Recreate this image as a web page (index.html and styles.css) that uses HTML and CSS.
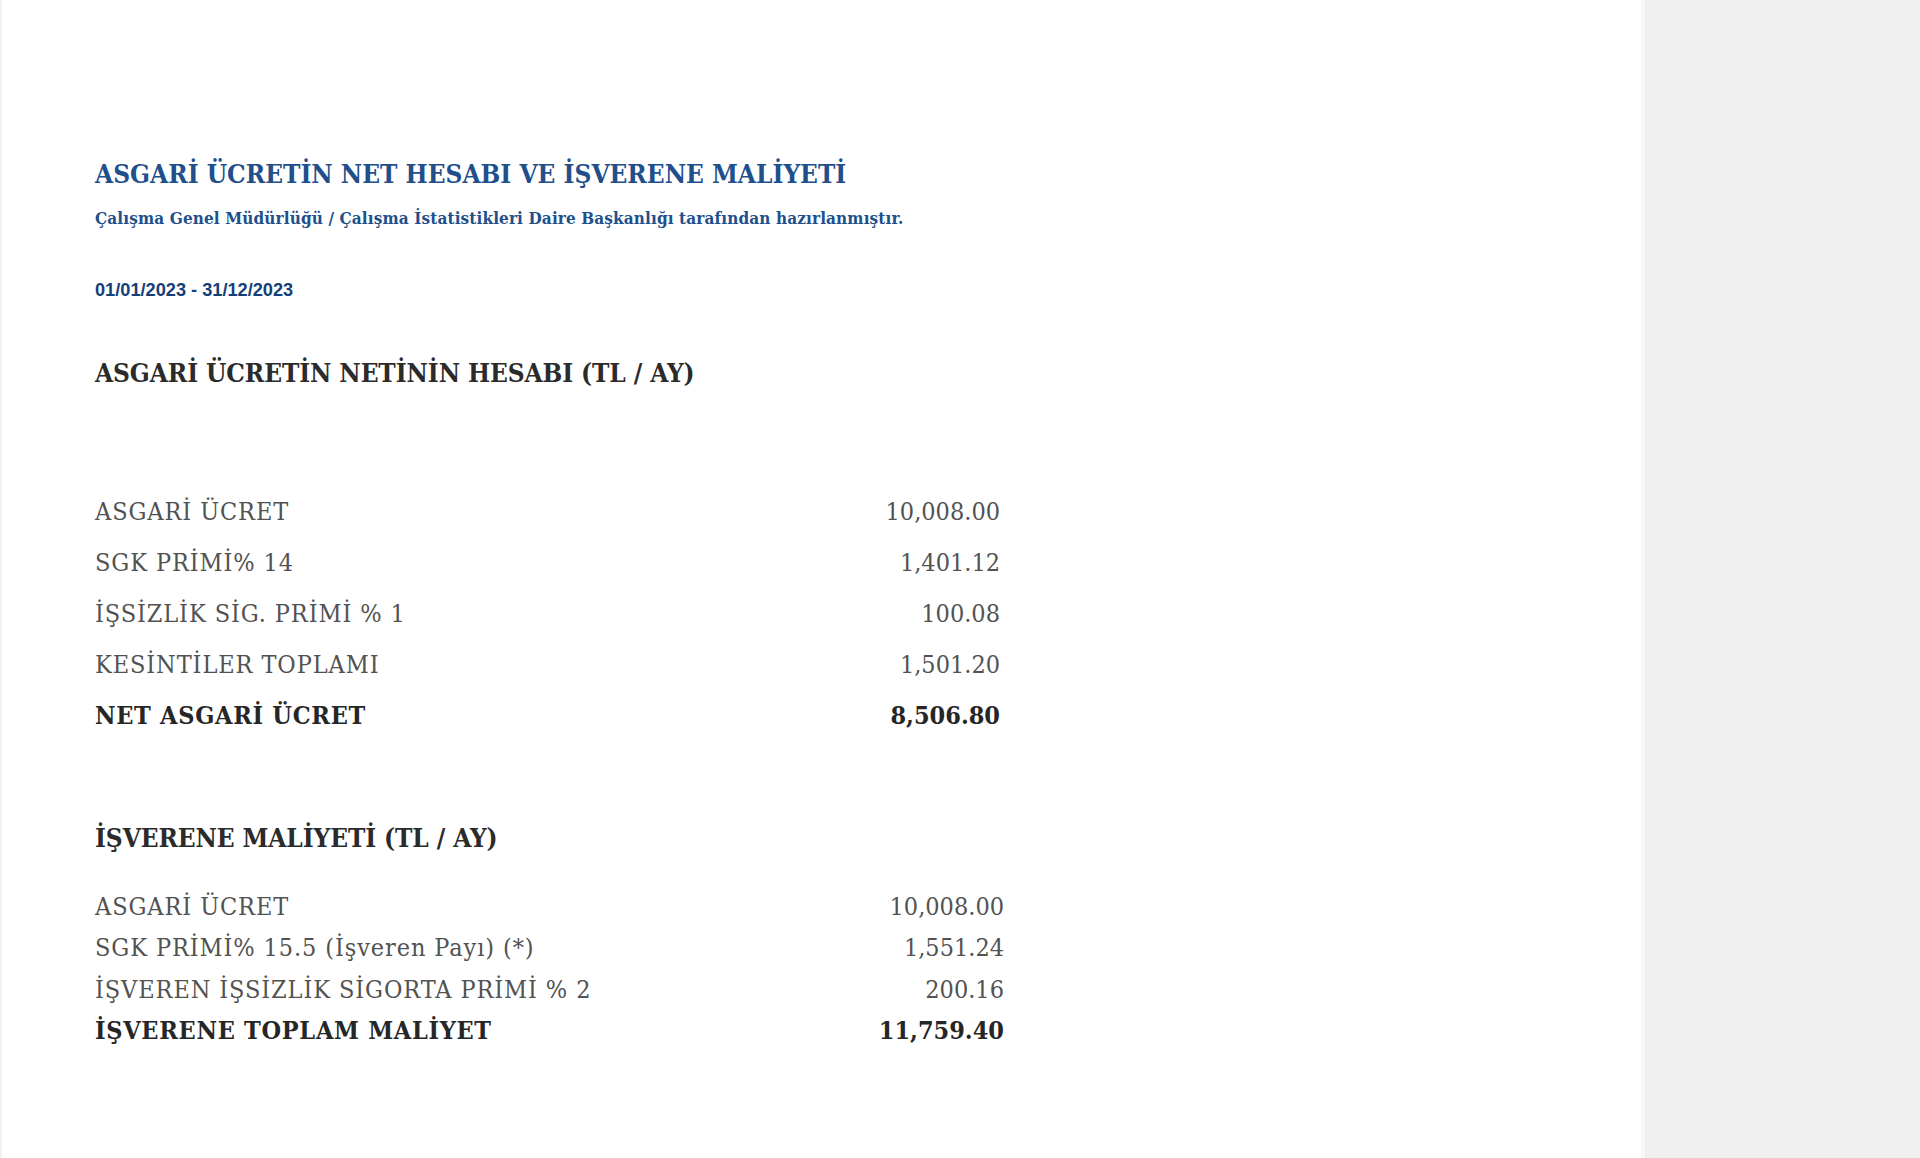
FILE: index.html
```html
<!DOCTYPE html>
<html lang="tr">
<head>
<meta charset="utf-8">
<title>Asgari Ücret</title>
<link rel="stylesheet" href="styles.css">
</head>
<body>
<div class="page">
  <main class="content">
    <h1 class="title">ASGARİ ÜCRETİN NET HESABI VE İŞVERENE MALİYETİ</h1>
    <p class="subtitle">Çalışma Genel Müdürlüğü / Çalışma İstatistikleri Daire Başkanlığı tarafından hazırlanmıştır.</p>
    <p class="period">01/01/2023 - 31/12/2023</p>

    <h2 class="section first">ASGARİ ÜCRETİN NETİNİN HESABI (TL / AY)</h2>
    <table class="calc net">
      <tr><td class="label">ASGARİ ÜCRET</td><td class="num">10,008.00</td></tr>
      <tr><td class="label">SGK PRİMİ% 14</td><td class="num">1,401.12</td></tr>
      <tr><td class="label">İŞSİZLİK SİG. PRİMİ % 1</td><td class="num">100.08</td></tr>
      <tr><td class="label">KESİNTİLER TOPLAMI</td><td class="num">1,501.20</td></tr>
      <tr class="total"><td class="label">NET ASGARİ ÜCRET</td><td class="num">8,506.80</td></tr>
    </table>

    <h2 class="section second">İŞVERENE MALİYETİ (TL / AY)</h2>
    <table class="calc cost">
      <tr><td class="label">ASGARİ ÜCRET</td><td class="num">10,008.00</td></tr>
      <tr><td class="label">SGK PRİMİ% 15.5 (İşveren Payı) (*)</td><td class="num">1,551.24</td></tr>
      <tr><td class="label">İŞVEREN İŞSİZLİK SİGORTA PRİMİ % 2</td><td class="num">200.16</td></tr>
      <tr class="total"><td class="label">İŞVERENE TOPLAM MALİYET</td><td class="num">11,759.40</td></tr>
    </table>
  </main>
  <aside class="sidebar"></aside>
</div>
</body>
</html>
```

FILE: styles.css
```css
html, body {
  margin: 0;
  padding: 0;
  background: #ffffff;
}

.page {
  display: flex;
  height: 1158px;
  overflow: hidden;
}

.content {
  width: 1645px;
  flex: none;
  box-sizing: border-box;
  border-left: 2px solid #f0f0f0;
  border-right: 4px solid #f8f8f8;
  padding: 156px 0 0 93px;
  font-family: "DejaVu Serif Condensed", "DejaVu Serif", serif;
  font-stretch: condensed;
}

.sidebar {
  flex: 1;
  background: #efefef;
}

.title {
  margin: 0;
  font-size: 26px;
  line-height: 36px;
  font-weight: bold;
  color: #214f8c;
}

.subtitle {
  margin: 14px 0 0;
  font-size: 17px;
  line-height: 24px;
  font-weight: bold;
  letter-spacing: 0.12px;
  color: #214f8c;
}

.period {
  margin: 48px 0 0;
  font-family: "Liberation Sans", Arial, sans-serif;
  font-size: 18.2px;
  line-height: 24px;
  font-weight: bold;
  color: #153f78;
}

.section {
  margin: 0;
  font-size: 26px;
  line-height: 36px;
  font-weight: bold;
  letter-spacing: -0.1px;
  color: #2b2b2b;
}

.section.first {
  margin-top: 53px;
}

.section.second {
  margin-top: 79px;
}

.calc {
  border-collapse: collapse;
  font-size: 25px;
  color: #525252;
}

.calc td {
  padding: 0;
  white-space: nowrap;
}

.calc .label {
  letter-spacing: 0.9px;
}

.calc .num {
  text-align: right;
}

.calc .total td {
  font-weight: bold;
  color: #262626;
}

.calc .total .label {
  letter-spacing: 0.7px;
}

.net {
  width: 905px;
  margin-top: 95px;
}

.net td {
  height: 51px;
  line-height: 51px;
}

.cost {
  width: 909px;
  margin-top: 30px;
}

.cost td {
  height: 41.4px;
  line-height: 41.4px;
}
```
